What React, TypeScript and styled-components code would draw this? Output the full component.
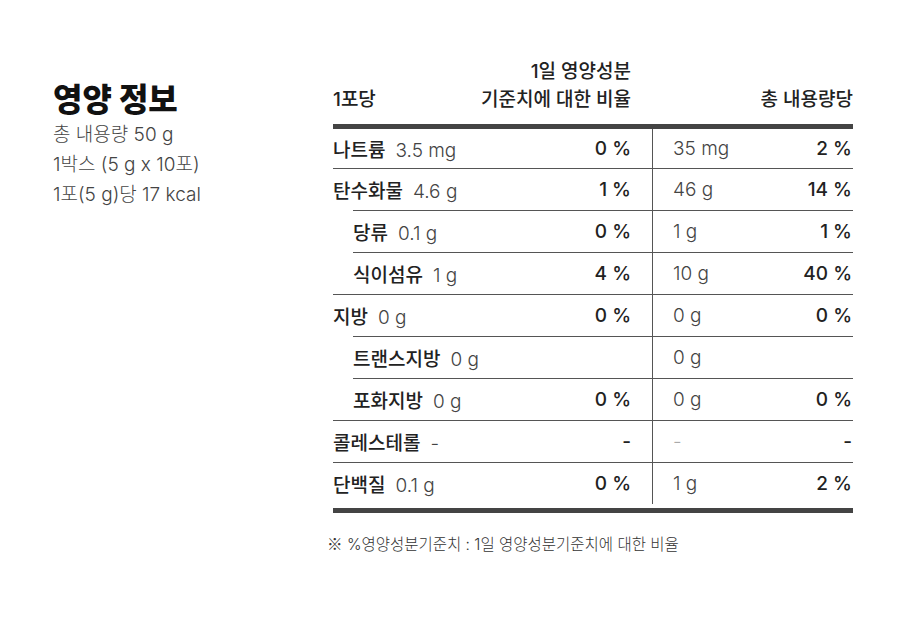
import React from "react";
import styled, { createGlobalStyle } from "styled-components";

const Global = createGlobalStyle`
  html, body { margin: 0; padding: 0; background: #fff; }
  body { font-family: Inter, "Noto Sans CJK KR", sans-serif; color: #222; }
`;

const Page = styled.div`
  display: flex;
  padding: 58px 0 0 53px;
  width: 900px;
  height: 625px;
  box-sizing: border-box;
`;

const Side = styled.div`
  width: 280px;
  padding-top: 24px;
  display: flex;
  flex-direction: column;
`;

const Title = styled.h1`
  margin: 0 0 2px;
  font-size: 32px;
  line-height: 36px;
  font-weight: 800;
  color: #111;
`;

const Info = styled.div`
  font-size: 19px;
  line-height: 30px;
  font-weight: 300;
  color: #444;
`;

const Main = styled.div`
  width: 520px;
  display: flex;
  flex-direction: column;
`;

const Header = styled.div`
  display: grid;
  grid-template-columns: 298px 1fr;
  align-items: end;
  padding-bottom: 10px;
  font-size: 19px;
  line-height: 28px;
  font-weight: 500;
  color: #222;
`;

const HeadLeft = styled.div`
  display: flex;
  justify-content: space-between;
  align-items: flex-end;
`;

const HeadRight = styled.div`
  text-align: right;
`;

const Stack = styled.div`
  text-align: right;
`;

const Table = styled.div`
  border-top: 5px solid #444;
  border-bottom: 5px solid #444;
  padding-bottom: 4px;
  display: flex;
  flex-direction: column;
`;

const Row = styled.div`
  display: grid;
  grid-template-columns: 319px 1fr;
  height: 42px;
  &:first-child { height: 39px; }
`;

const LeftCell = styled.div<{ $sub?: boolean; $first?: boolean }>`
  display: flex;
  align-items: center;
  justify-content: space-between;
  margin-left: ${(p) => (p.$sub ? "20px" : "0")};
  padding-right: 21px;
  border-top: ${(p) => (p.$first ? "none" : "1px solid #555")};
`;

const RightCell = styled.div<{ $first?: boolean }>`
  display: flex;
  align-items: center;
  justify-content: space-between;
  padding: 0 1px 0 20px;
  border-left: 1px solid #555;
  border-top: ${(p) => (p.$first ? "none" : "1px solid #555")};
`;

const Name = styled.span`
  font-size: 19px;
  font-weight: 500;
  color: #222;
`;

const Amount = styled.span<{ $faint?: boolean }>`
  font-size: 19px;
  font-weight: 300;
  color: ${(p) => (p.$faint ? "#aaa" : "#444")};
  margin-left: 10px;
`;

const TotalAmount = styled.span<{ $faint?: boolean }>`
  font-size: 19px;
  font-weight: 300;
  color: ${(p) => (p.$faint ? "#aaa" : "#444")};
`;

const Pct = styled.span`
  font-size: 19px;
  font-weight: 500;
  color: #222;
`;

const Note = styled.p`
  margin: 19px 0 0 -6px;
  font-size: 15.5px;
  font-weight: 300;
  color: #333;
`;

const Mark = styled.span`
  font-family: "Noto Sans CJK KR", sans-serif;
`;

type Item = {
  name: string;
  amount: string;
  pct: string;
  total: string;
  totalPct: string;
  sub?: boolean;
  dash?: boolean;
};

const items: Item[] = [
  { name: "나트륨", amount: "3.5 mg", pct: "0 %", total: "35 mg", totalPct: "2 %" },
  { name: "탄수화물", amount: "4.6 g", pct: "1 %", total: "46 g", totalPct: "14 %" },
  { name: "당류", amount: "0.1 g", pct: "0 %", total: "1 g", totalPct: "1 %", sub: true },
  { name: "식이섬유", amount: "1 g", pct: "4 %", total: "10 g", totalPct: "40 %", sub: true },
  { name: "지방", amount: "0 g", pct: "0 %", total: "0 g", totalPct: "0 %" },
  { name: "트랜스지방", amount: "0 g", pct: "", total: "0 g", totalPct: "", sub: true },
  { name: "포화지방", amount: "0 g", pct: "0 %", total: "0 g", totalPct: "0 %", sub: true },
  { name: "콜레스테롤", amount: "-", pct: "-", total: "-", totalPct: "-", dash: true },
  { name: "단백질", amount: "0.1 g", pct: "0 %", total: "1 g", totalPct: "2 %" },
];

export default function App() {
  return (
    <>
      <Global />
      <Page>
        <Side>
          <Title>영양 정보</Title>
          <Info>총 내용량 50 g</Info>
          <Info>1박스 (5 g x 10포)</Info>
          <Info>1포(5 g)당 17 kcal</Info>
        </Side>
        <Main>
          <Header>
            <HeadLeft>
              <span>1포당</span>
              <Stack>
                1일 영양성분
                <br />
                기준치에 대한 비율
              </Stack>
            </HeadLeft>
            <HeadRight>총 내용량당</HeadRight>
          </Header>
          <Table>
            {items.map((it, i) => (
              <Row key={it.name}>
                <LeftCell $sub={it.sub} $first={i === 0}>
                  <span>
                    <Name>{it.name}</Name>
                    <Amount>{it.amount}</Amount>
                  </span>
                  <Pct>{it.pct}</Pct>
                </LeftCell>
                <RightCell $first={i === 0}>
                  <TotalAmount $faint={it.dash}>{it.total}</TotalAmount>
                  <Pct>{it.totalPct}</Pct>
                </RightCell>
              </Row>
            ))}
          </Table>
          <Note>
            <Mark>※</Mark> %영양성분기준치 : 1일 영양성분기준치에 대한 비율
          </Note>
        </Main>
      </Page>
    </>
  );
}
